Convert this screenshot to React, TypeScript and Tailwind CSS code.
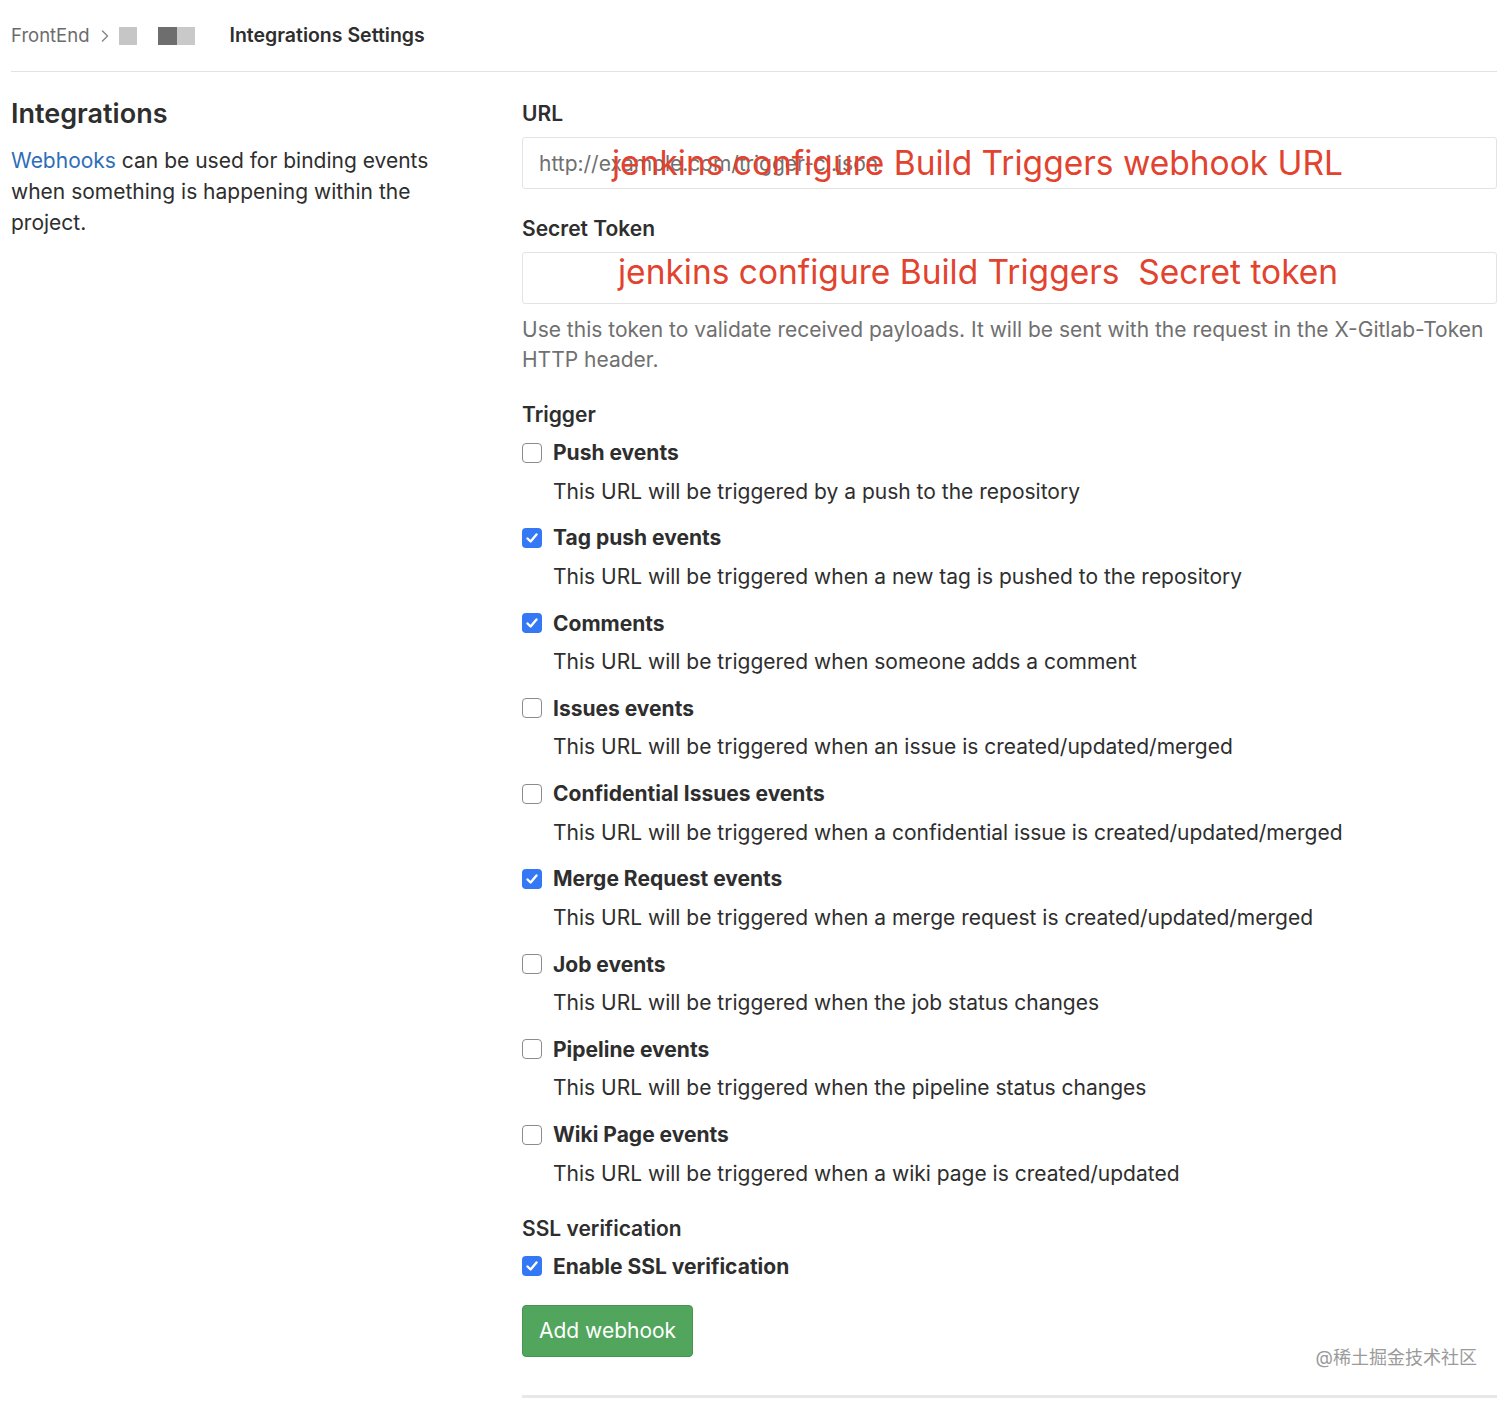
import React from "react";

const triggers = [
  { label: "Push events", desc: "This URL will be triggered by a push to the repository", checked: false },
  { label: "Tag push events", desc: "This URL will be triggered when a new tag is pushed to the repository", checked: true },
  { label: "Comments", desc: "This URL will be triggered when someone adds a comment", checked: true },
  { label: "Issues events", desc: "This URL will be triggered when an issue is created/updated/merged", checked: false },
  { label: "Confidential Issues events", desc: "This URL will be triggered when a confidential issue is created/updated/merged", checked: false },
  { label: "Merge Request events", desc: "This URL will be triggered when a merge request is created/updated/merged", checked: true },
  { label: "Job events", desc: "This URL will be triggered when the job status changes", checked: false },
  { label: "Pipeline events", desc: "This URL will be triggered when the pipeline status changes", checked: false },
  { label: "Wiki Page events", desc: "This URL will be triggered when a wiki page is created/updated", checked: false },
];

function Checkbox({ checked }: { checked: boolean }) {
  return checked ? (
    <span className="w-[20px] h-[20px] rounded-[4px] bg-[#3478f6] flex items-center justify-center shrink-0">
      <svg width="14" height="14" viewBox="0 0 14 14" fill="none">
        <path d="M2.5 7.5 L5.6 10.5 L11.5 3.5" stroke="white" strokeWidth="2.4" strokeLinecap="round" strokeLinejoin="round" />
      </svg>
    </span>
  ) : (
    <span className="w-[20px] h-[20px] rounded-[4px] border-[1.5px] border-[#8c8c8c] bg-white shrink-0" />
  );
}

export default function App() {
  return (
    <div
      className="relative min-h-[1403px] bg-white px-[11px] pr-[15px] text-[#2e2e2e]"
      style={{ fontFamily: 'Inter, "Noto Sans CJK SC", sans-serif' }}
    >
      {/* Breadcrumb */}
      <div className="h-[72px] border-b border-[#e3e3e3] flex items-center text-[18.5px]">
        <span className="text-[#6b6b6b]">FrontEnd</span>
        <svg className="ml-[10px]" width="10" height="14" viewBox="0 0 10 14" fill="none">
          <path d="M2.5 2 L7.5 7 L2.5 12" stroke="#8a8a8a" strokeWidth="1.5" strokeLinecap="round" strokeLinejoin="round" />
        </svg>
        <span className="ml-[9px] w-[18px] h-[18px] bg-[#c6c6c6]" />
        <span className="ml-[21px] w-[19px] h-[18px] bg-[#6e6e6e]" />
        <span className="w-[18px] h-[18px] bg-[#c9c9c9]" />
        <span className="ml-[35px] text-[19.5px] font-semibold text-[#2e2e2e]">Integrations Settings</span>
      </div>

      <div className="flex">
        {/* Left column */}
        <div className="w-[511px] shrink-0 pt-[24px]">
          <h4 className="text-[27px] leading-[36px] font-semibold text-[#2e2e2e]">Integrations</h4>
          <p className="mt-[13px] w-[440px] text-[21px] leading-[31px] text-[#2e2e2e]">
            <span className="text-[#2e6eb8]">Webhooks</span> can be used for binding events when something is happening within the project.
          </p>
        </div>

        {/* Right column */}
        <div className="flex-1 pt-[26px] text-[21px] leading-[31px]">
          <div className="font-semibold">URL</div>
          <div className="relative mt-[8px] h-[52px] border border-[#e3e3e3] rounded-[3px] flex items-center pl-[16px] text-[#707070]">
            http://example.com/trigger-ci.json
            <span className="absolute left-[89px] top-[3px] text-[33.5px] leading-[44px] text-[#e2432e] whitespace-pre">
              jenkins configure Build Triggers webhook URL
            </span>
          </div>

          <div className="mt-[24px] font-semibold">Secret Token</div>
          <div className="relative mt-[8px] h-[52px] border border-[#e3e3e3] rounded-[3px]">
            <span className="absolute left-[95px] top-[-3px] text-[33.5px] leading-[44px] text-[#e2432e] whitespace-pre">
              jenkins configure Build Triggers  Secret token
            </span>
          </div>
          <p className="mt-[11px] text-[#707070] leading-[30px]">
            Use this token to validate received payloads. It will be sent with the request in the X-Gitlab-Token HTTP header.
          </p>

          <div className="mt-[24px] font-semibold">Trigger</div>
          <div className="mt-[7px] flex flex-col gap-[15.75px]">
            {triggers.map((t) => (
              <div key={t.label}>
                <div className="flex items-center gap-[11px]">
                  <Checkbox checked={t.checked} />
                  <span className="font-bold">{t.label}</span>
                </div>
                <div className="mt-[7.5px] pl-[31px]">{t.desc}</div>
              </div>
            ))}
          </div>

          <div className="mt-[24px] font-semibold">SSL verification</div>
          <div className="mt-[7px] flex items-center gap-[11px]">
            <Checkbox checked />
            <span className="font-bold">Enable SSL verification</span>
          </div>

          <button className="mt-[23px] h-[52px] px-[16px] rounded-[4px] bg-[#52a55d] border border-[#47964f] text-white text-[21px]">
            Add webhook
          </button>

          <div className="mt-[38px] border-t-[3px] border-[#e8e8e8]" />
        </div>
      </div>

      {/* Watermark */}
      <div className="absolute right-[35px] top-[1346px] text-[18px] leading-[24px] text-[#9a9a9a]">@稀土掘金技术社区</div>
    </div>
  );
}
